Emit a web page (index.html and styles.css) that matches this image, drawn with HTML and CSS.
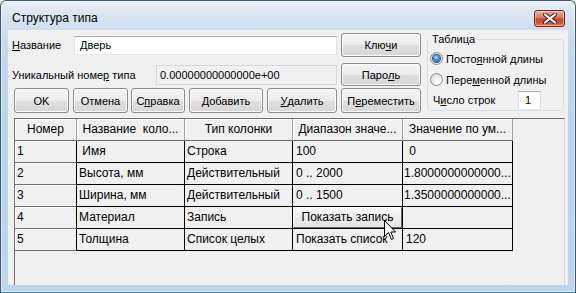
FILE: index.html
```html
<!DOCTYPE html>
<html lang="ru">
<head>
<meta charset="utf-8">
<title>Структура типа</title>
<link rel="stylesheet" href="styles.css">
</head>
<body>
<div class="window">
  <div class="titlebar">
    <span class="title">Структура типа</span>
    <div class="close">
      <svg width="16" height="11" viewBox="0 0 16 11">
        <path d="M3 1.5 L13 9.5 M13 1.5 L3 9.5" stroke="#5a2217" stroke-width="4.2" stroke-linecap="round"/>
        <path d="M3 1.5 L13 9.5 M13 1.5 L3 9.5" stroke="#ffffff" stroke-width="2.2" stroke-linecap="round"/>
      </svg>
    </div>
  </div>
  <div class="client">
    <div class="top">
      <div class="left">
        <div class="row r1">
          <span class="lbl lbl-name"><u>Н</u>азвание</span>
          <div class="field">Дверь</div>
          <div class="btn btn-side">Клю<u>ч</u>и</div>
        </div>
        <div class="row r2">
          <span class="lbl lbl-uid">Уникальный номе<u>р</u> типа</span>
          <div class="ro">0.00000000000000e+00</div>
          <div class="btn btn-side btn-r2">Паро<u>л</u>ь</div>
        </div>
        <div class="row r3">
          <div class="btn b-ok">OK</div>
          <div class="btn b-cancel">Отмена</div>
          <div class="btn b-help">С<u>п</u>равка</div>
          <div class="btn b-add"><u>Д</u>обавить</div>
          <div class="btn b-del"><u>У</u>далить</div>
          <div class="btn b-move">П<u>е</u>реместить</div>
        </div>
      </div>
      <fieldset class="group">
        <legend>Таблица</legend>
        <div class="opt"><span class="radio on"><span class="dot"></span></span><span class="opt-t">Посто<u>я</u>нной длины</span></div>
        <div class="opt"><span class="radio"></span><span class="opt-t">Пере<u>м</u>енной длины</span></div>
        <div class="count"><span class="count-l">Ч<u>и</u>сло строк</span><div class="num">1</div></div>
      </fieldset>
    </div>
    <div class="panel">
      <div class="grid">
        <div class="c h">Номер</div>
        <div class="c h">Название&nbsp; коло...</div>
        <div class="c h">Тип колонки</div>
        <div class="c h">Диапазон значе...</div>
        <div class="c h">Значение по ум...</div>

        <div class="c fc">1</div>
        <div class="c">&nbsp;Имя</div>
        <div class="c">Строка</div>
        <div class="c p3">100</div>
        <div class="c p3">&nbsp;0</div>

        <div class="c fc">2</div>
        <div class="c">Высота, мм</div>
        <div class="c">Действительный</div>
        <div class="c p3">0 .. 2000</div>
        <div class="c p1">1.8000000000000...</div>

        <div class="c fc">3</div>
        <div class="c">Ширина, мм</div>
        <div class="c">Действительный</div>
        <div class="c p3">0 .. 1500</div>
        <div class="c p1">1.3500000000000...</div>

        <div class="c fc">4</div>
        <div class="c">Материал</div>
        <div class="c">Запись</div>
        <div class="c bc"><div class="cellbtn">Показать запись</div></div>
        <div class="c"></div>

        <div class="c fc">5</div>
        <div class="c">Толщина</div>
        <div class="c">Список целых</div>
        <div class="c p3">Показать список</div>
        <div class="c p3">120</div>
      </div>
    </div>
  </div>
  <svg class="cursor" width="13" height="21" viewBox="0 0 13 21">
    <path d="M0.5 0.5 L0.5 16.5 L4.5 12.5 L7.5 19.5 L9.5 18.5 L6.8 12 L11.5 12 Z" fill="#ffffff" stroke="#000000" stroke-width="1" stroke-linejoin="miter"/>
  </svg>
</div>
</body>
</html>
```

FILE: styles.css
```css
* { box-sizing: border-box; }
html, body { margin: 0; padding: 0; background: #ffffff; }
body {
  font-family: "Liberation Sans", Arial, sans-serif;
  font-size: 11px;
  color: #000;
}
u { text-decoration: underline; text-underline-offset: 1px; }

.window {
  position: relative;
  width: 576px;
  height: 293px;
  border: 1px solid #40566e;
  border-bottom-color: #3b7fb3;
  border-radius: 6px 6px 0 0;
  background: linear-gradient(to bottom, #e6eef8 0px, #d6e3f1 18px, #c6d9ed 40px, #bcd3eb 120px, #bcd4ec 100%);
  box-shadow: inset 0 0 0 1px rgba(255,255,255,0.55);
  display: flex;
  flex-direction: column;
  overflow: hidden;
}

.titlebar {
  flex: none;
  height: 29px;
  display: flex;
  justify-content: space-between;
  align-items: flex-start;
  padding: 0 10px 0 11px;
}
.title {
  font-size: 12px;
  line-height: 14px;
  margin-top: 10px;
}
.close {
  width: 31px;
  height: 17px;
  margin-top: 9px;
  border: 1px solid #6e2a1f;
  border-radius: 3px;
  background: linear-gradient(to bottom, #eab3a6 0%, #d9806c 40%, #c8472f 55%, #c9553b 80%, #da8a6e 100%);
  box-shadow: inset 0 0 0 1px rgba(255,220,210,0.45);
  display: flex;
  align-items: center;
  justify-content: center;
}

.client {
  flex: none;
  margin: 0 7px;
  height: 255px;
  background: #f0f0f0;
  display: flex;
  flex-direction: column;
}

.top {
  flex: none;
  display: flex;
  align-items: flex-start;
  height: 83px;
}
.left {
  flex: none;
  width: 413px;
  display: flex;
  flex-direction: column;
}
.row {
  display: flex;
  align-items: center;
  flex: none;
}
.r1 { margin-top: 3px; height: 24px; }
.r2 { margin-top: 6px; height: 23px; }
.r3 { margin-top: 2px; height: 25px; padding-left: 6px; }

.lbl { flex: none; margin-left: 4px; white-space: nowrap; }
.lbl-name { width: 62px; }
.lbl-uid { width: 144px; }

.field {
  flex: none;
  width: 263px;
  height: 19px;
  background: #fff;
  border: 1px solid;
  border-color: #abadb3 #dbdfe6 #e3e9ef #e2e3ea;
  padding-left: 5px;
  line-height: 17px;
}
.ro {
  flex: none;
  width: 181px;
  height: 20px;
  background: #f0f0f0;
  border: 1px solid #d9d9d9;
  padding-left: 3px;
  line-height: 18px;
}

.btn {
  flex: none;
  height: 25px;
  border: 1px solid #8c8c8c;
  border-radius: 3px;
  background: linear-gradient(to bottom, #f4f4f4 0%, #ebebeb 50%, #dfdfdf 51%, #d6d6d6 100%);
  box-shadow: inset 0 0 0 1px #fbfbfb;
  display: flex;
  align-items: center;
  justify-content: center;
  white-space: nowrap;
}
.btn-side { margin-left: 4px; width: 80px; height: 24px; }
.btn-r2 { height: 23px; }
.b-ok { width: 55px; }
.b-cancel { width: 55px; margin-left: 4px; }
.b-help { width: 54px; margin-left: 3px; }
.b-add { width: 74px; margin-left: 4px; }
.b-del { width: 70px; margin-left: 4px; }
.b-move { width: 80px; margin-left: 4px; }

.group {
  flex: none;
  margin: 3px 0 0 6px;
  width: 137px;
  padding: 2px 0 0 0;
  border: 1px solid #d5dfe5;
  border-radius: 3px;
  min-inline-size: 0;
}
.group legend {
  padding: 0 2px;
  margin-left: 2px;
  line-height: 13px;
  font-size: 11px;
}
.opt {
  height: 21px;
  display: flex;
  align-items: center;
}
.radio {
  flex: none;
  width: 13px;
  height: 13px;
  margin-left: 2px;
  border-radius: 50%;
  border: 1px solid #8e8f8f;
  background: radial-gradient(circle at 60% 70%, #ffffff 0%, #f0f0f0 40%, #d2d2d2 100%);
  display: flex;
  align-items: center;
  justify-content: center;
}
.radio .dot {
  width: 7px;
  height: 7px;
  border-radius: 50%;
  background: radial-gradient(circle at 45% 35%, #bfe4ff 0%, #4a9be0 35%, #145aa8 90%);
  box-shadow: 0 0 0 1px #1c4f88;
}
.opt-t { margin-left: 3px; white-space: nowrap; }
.count {
  height: 20px;
  display: flex;
  align-items: center;
}
.count-l { width: 85px; margin-left: 5px; white-space: nowrap; }
.num {
  width: 23px;
  height: 19px;
  background: #fff;
  border: 1px solid;
  border-color: #abadb3 #dbdfe6 #e3e9ef #e2e3ea;
  padding-left: 6px;
  line-height: 17px;
}

.panel {
  flex: 1;
  margin: 5px 0 0 6px;
  width: 551px;
  border-top: 1px solid #6f6f6f;
  border-left: 1px solid #6f6f6f;
  border-right: 1px solid #d8d8d8;
}
.grid {
  display: grid;
  grid-template-columns: 62px 108px 108px 110px 110px;
  grid-auto-rows: 22px;
  width: 498px;
}
.c {
  border-right: 1px solid #000;
  border-bottom: 1px solid #000;
  padding-left: 2px;
  font-size: 12px;
  line-height: 21px;
  white-space: nowrap;
  overflow: hidden;
}
.p3 { padding-left: 3px; }
.p1 { padding-left: 1px; }
.h {
  text-align: center;
  padding-left: 0;
  border-right-color: #a0a0a0;
  border-bottom-color: #696969;
  box-shadow: inset 1px 1px 0 #ffffff;
}
.fc {
  border-bottom-color: #6f6f6f;
  box-shadow: inset 1px 1px 0 #ffffff;
}
.bc { padding: 0; }
.cellbtn {
  height: 100%;
  border: 1px solid;
  border-color: #ffffff #696969 #696969 #ffffff;
  background: linear-gradient(to bottom, #f7f7f7, #e2e2e2);
  text-align: center;
  line-height: 19px;
}

.cursor {
  position: absolute;
  left: 383px;
  top: 219px;
}
```
